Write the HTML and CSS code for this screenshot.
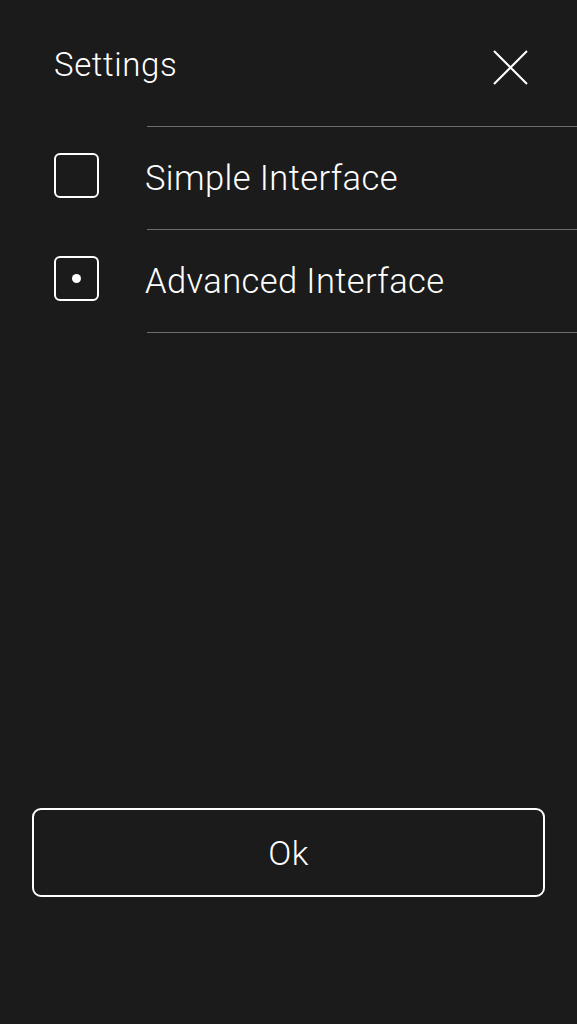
FILE: index.html
```html
<!DOCTYPE html>
<html lang="en">
<head>
    <meta charset="UTF-8">
    <meta name="viewport" content="width=device-width, initial-scale=1.0">
    <title>Settings</title>
    <link rel="stylesheet" href="styles.css">
</head>
<body>
    <div class="screen">
        <div class="header">
            <h1 class="title">Settings</h1>
            <button class="close" aria-label="Close">
                <svg width="35" height="35" viewBox="0 0 35 35">
                    <path d="M1 1 L34 34 M34 1 L1 34" stroke="#fff" stroke-width="2" fill="none"/>
                </svg>
            </button>
        </div>

        <div class="options">
            <div class="option">
                <span class="box"></span>
                <span class="label">Simple Interface</span>
            </div>
            <div class="option">
                <span class="box checked"></span>
                <span class="label">Advanced Interface</span>
            </div>
        </div>

        <button class="ok">Ok</button>
    </div>
</body>
</html>
```

FILE: styles.css
```css
html, body {
    margin: 0;
    padding: 0;
}
body {
    background-color: #1b1b1b;
    color: #fff;
    font-family: Roboto, "Liberation Sans", sans-serif;
    font-weight: 300;
}
.screen {
    display: flex;
    flex-direction: column;
    min-height: 100vh;
}
.header {
    display: flex;
    justify-content: space-between;
    height: 126px;
    padding: 0 49px 0 54px;
    box-sizing: border-box;
}
.title {
    margin: 45px 0 0 0;
    font-size: 33px;
    font-weight: 300;
    letter-spacing: 0.6px;
}
.close {
    background: none;
    border: none;
    padding: 0;
    width: 35px;
    height: 35px;
    cursor: pointer;
    margin-top: 50px;
}
.options {
    display: flex;
    flex-direction: column;
}
.option {
    display: flex;
    align-items: center;
}
.box {
    width: 45px;
    height: 45px;
    box-sizing: border-box;
    border: 2px solid #fff;
    border-radius: 6px;
    margin: 0 48px 5px 54px;
    display: flex;
    align-items: center;
    justify-content: center;
}
.box.checked::after {
    content: "";
    width: 9px;
    height: 9px;
    border-radius: 50%;
    background-color: #fff;
}
.label {
    flex: 1;
    height: 102px;
    display: flex;
    align-items: center;
    font-size: 34.5px;
    letter-spacing: 0.4px;
    border-top: 1px solid #6e6e6e;
    text-indent: -2px;
}
.option:last-child .label {
    border-bottom: 1px solid #6e6e6e;
}
.ok {
    margin: auto 32px 127px 32px;
    height: 89px;
    background: none;
    border: 2px solid #fff;
    border-radius: 9px;
    color: #fff;
    font-family: Roboto, "Liberation Sans", sans-serif;
    font-weight: 300;
    font-size: 34px;
    letter-spacing: 0.5px;
    cursor: pointer;
}
```
